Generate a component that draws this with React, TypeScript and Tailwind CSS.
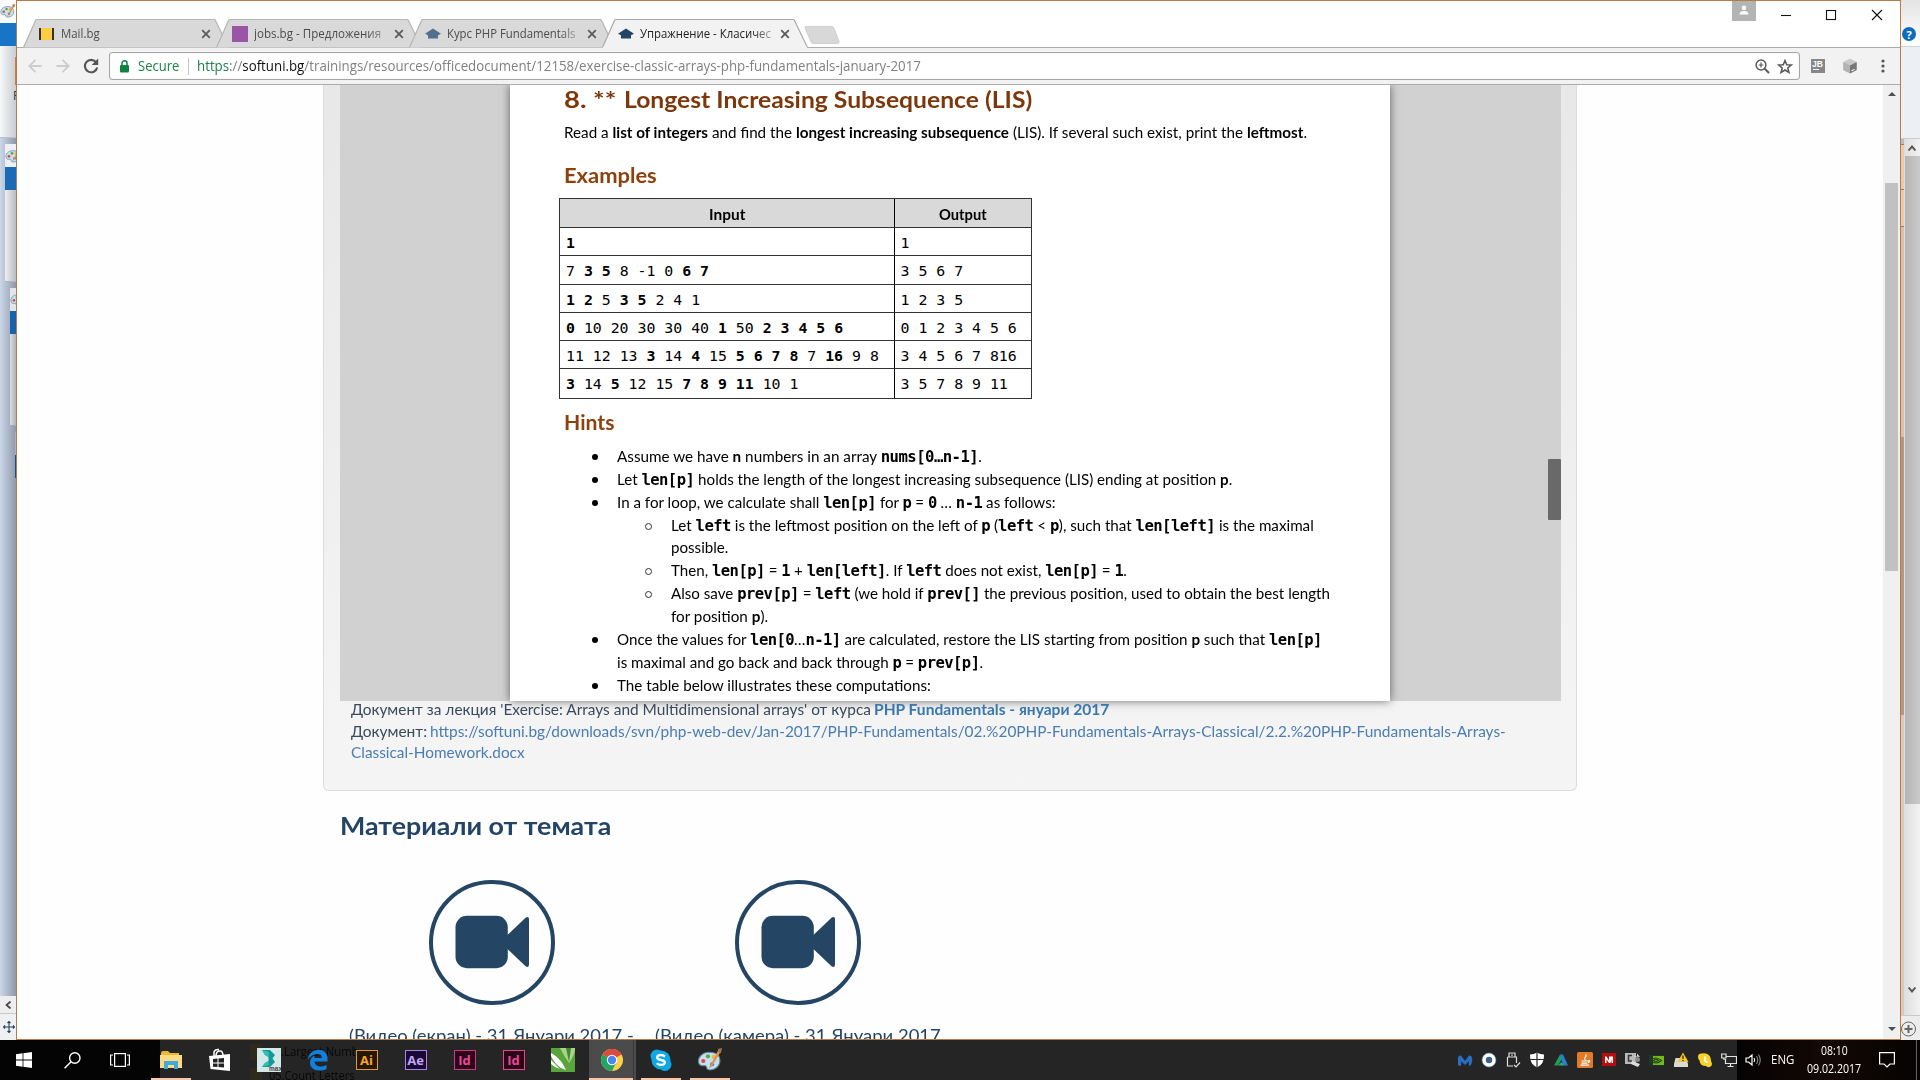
import { useLayoutEffect, useRef, useState, type ReactNode } from "react";

/** One line of text squeezed or stretched horizontally to a given width. */
function Fit({ w, className = "", children }: { w: number; className?: string; children: ReactNode }) {
  const ref = useRef<HTMLSpanElement>(null);
  const [k, setK] = useState(1);
  useLayoutEffect(() => {
    if (ref.current) setK(w / ref.current.offsetWidth);
  }, [w]);
  return (
    <span className="block shrink-0 whitespace-nowrap" style={{ width: w }}>
      <span ref={ref} className={`inline-block origin-left whitespace-pre ${className}`} style={{ transform: `scaleX(${k})` }}>
        {children}
      </span>
    </span>
  );
}

const UI = "font-['Open_Sans','Noto_Sans',sans-serif]";

/* ---------- tab strip ---------- */

function TabShape({ active }: { active?: boolean }) {
  return (
    <svg className="absolute inset-0" width="206" height="29" viewBox="0 0 206 29">
      <path
        d="M0.5 28.5 L12.5 1.5 Q13 0.5 14 0.5 H191 Q192 0.5 192.5 1.5 L205.5 28.5"
        fill={active ? "#f2f2f2" : "#d9d9d9"}
        stroke={active ? "#a9a9a9" : "#b5b5b5"}
        strokeWidth="1.2"
      />
      {active && <path d="M1 28.5 H205" stroke="#f2f2f2" strokeWidth="2" />}
    </svg>
  );
}

const CapIcon = ({ fill }: { fill: string }) => (
  <svg width="16" height="12" viewBox="0 0 16 12">
    <path d="M8 0.500 L16 5.800 L13 7.200 V10.500 H3 V7.200 L0 5.800 Z" fill={fill} />
  </svg>
);

function Tab({ icon, title, w, active, fade }: { icon: ReactNode; title: string; w: number; active?: boolean; fade?: boolean }) {
  return (
    <div className={`relative -mr-[12.7px] h-[29px] w-[206px] shrink-0 ${active ? "z-10" : ""}`}>
      <TabShape active={active} />
      <div className="relative flex h-[29px] items-center pl-[16px]">
        <span className="flex w-[16px] justify-center">{icon}</span>
        <div
          className={`ml-[6px] w-[134px] text-[12.6px] leading-[22px] ${UI} ${active ? "text-[#222]" : "text-[#4c4c4c]"} ${
            fade ? "[mask-image:linear-gradient(to_right,black_84%,rgba(0,0,0,0.25))]" : ""
          }`}
        >
          <Fit w={w}>{title}</Fit>
        </div>
        <svg className="ml-[6px]" width="10" height="10" viewBox="0 0 10 10">
          <path d="M1.2 1.2 L8.8 8.8 M8.8 1.2 L1.2 8.8" stroke="#5c5c5c" strokeWidth="1.8" />
        </svg>
      </div>
    </div>
  );
}

function TabStrip() {
  return (
    <div className="relative flex h-[47px] items-end border-b border-[#acacac] bg-white pl-[5.5px]">
      <div className="relative -mb-px flex">
        <Tab
          title="Mail.bg"
          w={39}
          icon={<span className="h-[12px] w-[15px] border-x-2 border-[#333] bg-[#ffce45]" />}
        />
        <Tab title="jobs.bg - Предложения" w={127} fade icon={<span className="h-[16px] w-[16px] bg-[#9a55a6]" />} />
        <Tab title="Курс PHP Fundamentals" w={128} fade icon={<CapIcon fill="#526f8c" />} />
        <Tab title="Упражнение - Класичес" w={131} fade active icon={<CapIcon fill="#234465" />} />
      </div>
      <svg className="mb-[3px] ml-[8px]" width="36" height="18" viewBox="0 0 36 18">
        <path d="M2 0.5 H28 Q29.5 0.5 30 2 L35 15 Q35.500 17.5 34 17.5 H9 Q7.500 17.500 7 16 L1 2 Q0.500 0.500 2 0.500 Z" fill="#d8d8d8" stroke="#cccccc" strokeWidth="0.8" />
      </svg>
      <div className="absolute right-0 top-0 flex h-[28px] items-start">
        <span className="flex h-[20px] w-[24px] justify-center bg-[#b4b4b4] pt-[4px]">
          <svg width="10" height="10" viewBox="0 0 10 10">
            <circle cx="5" cy="2.700" r="2.300" fill="#fff" />
            <path d="M0.500 9.500 Q0.500 6 5 6 Q9.500 6 9.500 9.500 Z" fill="#fff" />
          </svg>
        </span>
        <svg width="144" height="28" viewBox="0 0 144 28" fill="none" stroke="#111" strokeWidth="1.100">
          <path d="M25 14.500 H35" />
          <rect x="70.500" y="9.500" width="9" height="9" />
          <path d="M116 9 L126 19 M126 9 L116 19" />
        </svg>
      </div>
    </div>
  );
}

/* ---------- toolbar ---------- */

function Toolbar() {
  return (
    <div className="flex h-[37px] items-center border-b border-[#acacac] bg-[#f2f2f2] pl-[11px]">
      <svg width="14" height="14" viewBox="0 0 14 14" fill="none" stroke="#cdcdcd" strokeWidth="1.900">
        <path d="M13.500 7 H1.500 M7.500 0.800 L1.300 7 L7.500 13.200" />
      </svg>
      <svg className="ml-[14px]" width="14" height="14" viewBox="0 0 14 14" fill="none" stroke="#cdcdcd" strokeWidth="1.900">
        <path d="M0.500 7 H12.500 M6.500 0.800 L12.700 7 L6.500 13.200" />
      </svg>
      <svg className="ml-[13px]" width="16" height="16" viewBox="0 0 16 16">
        <path d="M13 4.200 A6.200 6.200 0 1 0 14.200 9.500" fill="none" stroke="#555" strokeWidth="2.100" />
        <path d="M15.200 0.500 V7 H8.700 Z" fill="#555" />
      </svg>
      <div className="ml-[10px] flex h-[28px] w-[1691px] items-center rounded-[3px] border border-[#a6a6a6] bg-white pl-[10px] shadow-[inset_0_0_1px_#bbb]">
        <svg width="9" height="13" viewBox="0 0 9 13">
          <path d="M2 6 V3.300 A2.500 2.500 0 0 1 7 3.300 V6" fill="none" stroke="#0f8145" strokeWidth="1.500" />
          <rect x="0" y="5" width="9" height="7.500" rx="1" fill="#0f8145" />
        </svg>
        <div className={`ml-[9px] flex items-center text-[14px] leading-[24px] ${UI}`}>
          <Fit w={41} className="text-[#1b8049]">Secure</Fit>
          <span className="ml-[8.500px] h-[17px] w-px bg-[#c4c4c4]" />
          <span className="w-[8.500px]" />
          <Fit w={724} className="text-[#808080]">
            <span className="text-[#1b8049]">https</span>://<span className="text-[#111]">softuni.bg</span>
            /trainings/resources/officedocument/12158/exercise-classic-arrays-php-fundamentals-january-2017
          </Fit>
        </div>
        <div className="ml-auto flex items-center gap-[7px] pr-[6px]">
          <svg width="15" height="15" viewBox="0 0 15 15" fill="none" stroke="#585858">
            <circle cx="6" cy="6" r="4.900" strokeWidth="1.500" />
            <path d="M9.600 9.600 L14 14" strokeWidth="2" />
            <path d="M3.600 6 H8.400 M6 3.600 V8.400" strokeWidth="1.200" />
          </svg>
          <svg width="16" height="15" viewBox="0 0 16 15" fill="none" stroke="#585858" strokeWidth="1.500">
            <path d="M8 1.500 L9.700 5.700 L14.300 6 L10.800 9 L12 13.500 L8 11 L4 13.500 L5.200 9 L1.700 6 L6.300 5.700 Z" />
          </svg>
        </div>
      </div>
      <span className="ml-[11px] flex h-[14px] w-[14px] flex-col bg-[#878787] pl-px font-['Liberation_Sans',sans-serif] text-[8.500px] font-bold leading-[10px] text-white">
        JB
        <span className="ml-px h-px w-[6px] bg-white" />
      </span>
      <svg className="ml-[18px]" width="14" height="16" viewBox="0 0 14 16">
        <path d="M7 0.500 L13.700 4 V12 L7 15.500 L0.300 12 V4 Z" fill="#c9c9c9" />
        <path d="M7 7.500 L13.700 4 V12 L7 15.500 Z" fill="#777" />
        <path d="M0.300 4 L7 7.500 V15.500 L0.300 12 Z" fill="#b3b3b3" />
        <path d="M8.500 13 L11.500 11.300" stroke="#eee" strokeWidth="1.200" />
      </svg>
      <svg className="ml-[23.500px]" width="4" height="14" viewBox="0 0 4 14" fill="#555">
        <circle cx="2" cy="2" r="1.600" />
        <circle cx="2" cy="7" r="1.600" />
        <circle cx="2" cy="12" r="1.600" />
      </svg>
    </div>
  );
}

/* ---------- document ---------- */

const M = ({ children }: { children: ReactNode }) => (
  <span className="font-['DejaVu_Sans_Mono',monospace] text-[15.400px] font-bold leading-none tracking-[-0.550px]">{children}</span>
);

/** Space-separated cells; a leading * marks a bold one. */
function Nums({ s }: { s: string }) {
  return (
    <span className="whitespace-pre font-['DejaVu_Sans_Mono',monospace] text-[14.850px]">
      {s.split(" ").map((t, i) => (
        <span key={i}>
          {i > 0 ? " " : ""}
          {t.startsWith("*") ? <b>{t.slice(1)}</b> : t}
        </span>
      ))}
    </span>
  );
}

const rows: [string, string][] = [
  ["*1", "1"],
  ["7 *3 *5 8 -1 0 *6 *7", "3 5 6 7"],
  ["*1 *2 5 *3 *5 2 4 1", "1 2 3 5"],
  ["*0 10 20 30 30 40 *1 50 *2 *3 *4 *5 *6", "0 1 2 3 4 5 6"],
  ["11 12 13 *3 14 *4 15 *5 *6 *7 *8 7 *16 9 8", "3 4 5 6 7 816"],
  ["*3 14 *5 12 15 *7 *8 *9 *11 10 1", "3 5 7 8 9 11"],
];

type Line = { mark?: "disc" | "ring"; sub?: boolean; w: number; text: ReactNode };
const lines: Line[] = [
  { mark: "disc", w: 365, text: <>Assume we have <b>n</b> numbers in an array <M>nums[0…n-1]</M>.</> },
  { mark: "disc", w: 615.5, text: <>Let <M>len[p]</M> holds the length of the longest increasing subsequence (LIS) ending at position <b>p</b>.</> },
  { mark: "disc", w: 439, text: <>In a for loop, we calculate shall <M>len[p]</M> for <M>p</M> = <M>0</M> … <M>n-1</M> as follows:</> },
  { mark: "ring", sub: true, w: 643, text: <>Let <M>left</M> is the leftmost position on the left of <M>p</M> (<M>left</M> &lt; <M>p</M>), such that <M>len[left]</M> is the maximal</> },
  { sub: true, w: 57.5, text: "possible." },
  { mark: "ring", sub: true, w: 456, text: <>Then, <M>len[p]</M> = <M>1</M> + <M>len[left]</M>. If <M>left</M> does not exist, <M>len[p]</M> = <M>1</M>.</> },
  { mark: "ring", sub: true, w: 659, text: <>Also save <M>prev[p]</M> = <M>left</M> (we hold if <M>prev[]</M> the previous position, used to obtain the best length</> },
  { sub: true, w: 97.5, text: <>for position <b>p</b>).</> },
  { mark: "disc", w: 704.5, text: <>Once the values for <M>len[0</M>…<M>n-1]</M> are calculated, restore the LIS starting from position <b>p</b> such that <M>len[p]</M></> },
  { w: 366.5, text: <>is maximal and go back and back through <M>p</M> = <M>prev[p]</M>.</> },
  { mark: "disc", w: 314, text: "The table below illustrates these computations:" },
];

function DocumentPage() {
  return (
    <div className="h-[616px] w-[880px] shrink-0 overflow-hidden bg-white pl-[54px] font-['Lato',sans-serif] text-[15px] text-black shadow-[0_0_9px_rgba(0,0,0,0.55)]">
      <div className="flex pt-px text-[23.500px] font-bold leading-[27px] text-[#7c380a]">
        <Fit w={59.5}>8. ** </Fit>
        <Fit w={408.5}>Longest Increasing Subsequence (LIS)</Fit>
      </div>
      <div className="mt-[6.500px] leading-[24px]">
        <Fit w={742.5}>
          Read a <b>list of integers</b> and find the <b>longest increasing subsequence</b> (LIS). If several such exist, print the <b>leftmost</b>.
        </Fit>
      </div>
      <div className="mt-[18px] text-[20.500px] font-bold leading-[26px] text-[#8f400b]">
        <Fit w={93}>Examples</Fit>
      </div>
      <div className="-ml-[5px] mt-[10.500px] w-[473px] border border-[#333]">
        <div className="flex h-[29px] border-b border-[#333] bg-[#d9d9d9] text-center font-bold leading-[30px]">
          <div className="flex w-[335px] justify-center border-r border-black pr-px"><Fit w={36}>Input</Fit></div>
          <div className="flex flex-1 justify-center"><Fit w={48}>Output</Fit></div>
        </div>
        {rows.map(([a, b], i) => (
          <div key={i} className="flex h-[28.250px] border-b border-[#333] leading-[28px] last:border-b-0">
            <div className="w-[335px] border-r border-black pl-[6px]"><Nums s={a} /></div>
            <div className="flex-1 pl-[5.500px]"><Nums s={b} /></div>
          </div>
        ))}
      </div>
      <div className="mt-[10.500px] text-[20.500px] font-bold leading-[26px] text-[#8f400b]">
        <Fit w={50.5}>Hints</Fit>
      </div>
      <div className="mt-[10px]">
        {lines.map((l, i) => (
          <div key={i} className="flex h-[22.870px] leading-[22.870px]">
            <span className={`flex shrink-0 items-center ${l.sub ? "w-[106.500px] pl-[81px]" : "w-[53px] pl-[27.500px]"}`}>
              {l.mark === "disc" && <span className="mt-[2px] h-[6px] w-[6px] rounded-full bg-black" />}
              {l.mark === "ring" && <span className="mt-[2px] h-[7px] w-[7px] rounded-full border border-[#333]" />}
            </span>
            <Fit w={l.w}>{l.text}</Fit>
          </div>
        ))}
      </div>
    </div>
  );
}

/* ---------- web page ---------- */

function VideoIcon() {
  return (
    <div className="flex h-[125px] w-[126px] items-center justify-center rounded-full border-4 border-[#244564] pb-[2px] pl-px">
      <svg width="75" height="54" viewBox="0 0 76 54" fill="#244564">
        <rect x="0.500" y="0.500" width="53" height="53" rx="11.500" />
        <path d="M52 21 L71.500 2.500 Q74.500 0.500 75 3.500 V50 Q74.500 53.500 71.500 51.500 L52 33 Z" />
      </svg>
    </div>
  );
}

function WebPage() {
  return (
    <div className="flex h-[954px] bg-[#fefefe]">
      <div className="h-[954px] w-[1866px] overflow-hidden pl-[306px] font-['Lato',sans-serif] text-[#234465]">
        <div className="h-[706px] w-[1254px] rounded-b-[6px] border border-t-0 border-[#dcdcdc] bg-gradient-to-b from-[#e8e8e8] to-[#f5f5f5] pl-[16px]">
          <div className="flex h-[616px] w-[1221px] bg-[#d1d1d1] pl-[170px]">
            <DocumentPage />
            <div className="flex h-[616px] w-[171px] items-start justify-end">
              <div className="mt-[374px] h-[61px] w-[13px] rounded-[1px] bg-[#696969]" />
            </div>
          </div>
          <div className="pl-[10.500px] text-[15px] leading-[21.500px]">
            <div className="-mt-[2px] flex">
              <Fit w={523.5} className="text-[#3a4a5c]">Документ за лекция 'Exercise: Arrays and Multidimensional arrays' от курса </Fit>
              <Fit w={235.5} className="font-bold text-[#3a76af]">PHP Fundamentals - януари 2017</Fit>
            </div>
            <div className="flex">
              <Fit w={79.5} className="text-[#3a4a5c]">Документ: </Fit>
              <Fit w={1075.5} className="text-[#4a7db3]">
                https://softuni.bg/downloads/svn/php-web-dev/Jan-2017/PHP-Fundamentals/02.%20PHP-Fundamentals-Arrays-Classical/2.2.%20PHP-Fundamentals-Arrays-
              </Fit>
            </div>
            <Fit w={174} className="text-[#4a7db3]">Classical-Homework.docx</Fit>
          </div>
        </div>
        <div className="ml-[17px] mt-[17px] text-[25.500px] font-bold leading-[34px]">
          <Fit w={271}>Материали от темата</Fit>
        </div>
        <div className="ml-[26px] mt-[38px] flex gap-[20px] text-[18px] leading-[26px]">
          <div className="w-[286px]">
            <div className="pl-[80px]"><VideoIcon /></div>
            <div className="mt-[17px]"><Fit w={284.5}>(Видео (екран) - 31 Януари 2017 -</Fit></div>
          </div>
          <div className="w-[286px]">
            <div className="pl-[80px]"><VideoIcon /></div>
            <div className="mt-[17px]"><Fit w={286}>(Видео (камера) - 31 Януари 2017</Fit></div>
          </div>
        </div>
      </div>
      <div className="flex h-[954px] w-[17px] flex-col items-center bg-[#f0f0f0]">
        <svg className="mt-[7px]" width="8" height="4" viewBox="0 0 8 4"><path d="M0 4 L4 0 L8 4 Z" fill="#505050" /></svg>
        <div className="mt-[87px] h-[388px] w-[13px] bg-[#c1c1c1]" />
        <svg className="mb-[8px] mt-auto" width="8" height="4" viewBox="0 0 8 4"><path d="M0 0 L4 4 L8 0 Z" fill="#505050" /></svg>
      </div>
    </div>
  );
}

/* ---------- windows behind the browser ---------- */

function Palette({ size = 22 }: { size?: number }) {
  return (
    <svg width={size} height={size} viewBox="0 0 24 24" className="shrink-0">
      <path d="M12 4 C4 4 0.500 10 1.500 14 C2.500 18 6 17 8 17 C10 17 8 21 12 21 C19 21 22.500 16 22 11 C21.500 6 17 4 12 4 Z" fill="#c7dfee" stroke="#5b8299" strokeWidth="1" />
      <circle cx="6" cy="12.500" r="2" fill="#d84b3e" />
      <circle cx="10.500" cy="8" r="2" fill="#57a64a" />
      <circle cx="16" cy="8.500" r="2" fill="#f0b63c" />
      <circle cx="14.500" cy="15.500" r="1.900" fill="#3a6fb0" />
      <path d="M21 1 L12.500 17 L11 20 L14.500 17.500 L23 3 Z" fill="#d89853" />
      <path d="M20 1 L24 0 L23 5 L20.500 4 Z" fill="#a9714b" />
    </svg>
  );
}

function LeftStrip() {
  return (
    <div className="relative flex h-[1040px] w-[16px] shrink-0 flex-col overflow-hidden bg-gradient-to-r from-[#ccd8ea] to-[#8f99aa]">
      <div className="flex h-[23px] items-center bg-[#fafafa]"><Palette size={15} /></div>
      <div className="h-[23px] bg-[#1874c5]" />
      <div className="h-[92px] border-b border-[#b8c2cf] bg-gradient-to-r from-[#f6f8fa] to-[#c9ccd1]">
        <div className="ml-[15px] mt-[11px] h-[28px] w-px bg-[#c9803e]" />
        <div className={`ml-[13px] mt-[4px] text-[12px] leading-[14px] text-[#333] ${UI}`}>P</div>
      </div>
      <div className="ml-[5px] mt-[6px] flex h-[23px] items-center bg-[#eef0f3]"><Palette size={16} /></div>
      <div className="ml-[5px] h-[23px] bg-[#1a6ab5]" />
      <div className="ml-[5px] h-[92px] border-b border-[#aab4c3] bg-gradient-to-r from-[#eef0f2] to-[#b9bcc0]" />
      <div className="ml-[10px] mt-[6px] flex h-[23px] items-center bg-[#e3e5e8]"><Palette size={16} /></div>
      <div className="ml-[10px] h-[23px] bg-[#1762a8]" />
      <div className="ml-[10px] h-[92px] border-b border-[#a0aaba] bg-gradient-to-r from-[#dcdedd] to-[#aeb1b2]" />
      <div className="ml-[15px] mt-[6px] h-[23px] bg-[#aab0b8]" />
      <div className="ml-[15px] h-[23px] bg-[#1b4d80]" />
      <div className="mt-auto flex h-[18px] items-center justify-center border-b border-[#c9c9c9] bg-[#eeeeee]">
        <svg width="7" height="8" viewBox="0 0 7 8" fill="none" stroke="#444" strokeWidth="1.700"><path d="M5.500 0.500 L1.500 4 L5.500 7.500" /></svg>
      </div>
      <div className="flex h-[26px] items-center bg-[#eef0f2] pl-[3px]">
        <svg width="12" height="12" viewBox="0 0 12 12" stroke="#25405e" fill="none" strokeWidth="1.100">
          <path d="M0.500 6 H11.500 M6 0.500 V11.500 M4.500 2 L6 0.500 L7.500 2 M4.500 10 L6 11.500 L7.500 10 M2 4.500 L0.500 6 L2 7.500 M10 4.500 L11.500 6 L10 7.500" />
        </svg>
      </div>
    </div>
  );
}

function RightStrip() {
  return (
    <div className="flex h-[1040px] w-[19px] shrink-0 flex-col bg-[#f0f0f0]">
      <div className="h-[47px] border-b border-[#cfd2d6] bg-gradient-to-b from-[#e4e4e4] to-white pt-[27px]">
        <span className={`ml-[1px] flex h-[14px] w-[14px] items-center justify-center rounded-full bg-[#0f6cbd] text-[11px] font-bold leading-none text-white ${UI}`}>?</span>
      </div>
      <div className="h-[92px] border-b border-[#c8ccd2] bg-[#eceff3]" />
      <div className="flex h-[876px]">
        <div className="flex w-[3px] flex-col">
          <div className="h-[5px] bg-[#bbb]" />
          <div className="h-[46px] border-y border-[#8f7f75] bg-[#e9cbb5]" />
          <div className="h-[37px] border-b border-[#8f7f75] bg-[#e9cbb5]" />
          <div className="h-[210px] bg-[#dcc0af]" />
          <div className="h-[278px] bg-[#b39787]" />
          <div className="flex-1 bg-[#dcc8bc]" />
        </div>
        <div className="flex flex-1 flex-col items-center bg-gradient-to-r from-[#dedede] to-[#f2f2f2]">
          <svg className="mt-[6px]" width="8" height="6" viewBox="0 0 8 6" fill="none" stroke="#555" strokeWidth="1.900"><path d="M0.500 5.500 L4 1.500 L7.500 5.500" /></svg>
          <div className="mt-[5px] h-[648px] w-[15px] bg-gradient-to-r from-[#b5b5b5] to-[#cacaca]" />
          <svg className="mb-[22px] mt-auto" width="8" height="6" viewBox="0 0 8 6" fill="none" stroke="#555" strokeWidth="1.900"><path d="M0.500 0.500 L4 4.500 L7.500 0.500" /></svg>
        </div>
      </div>
      <div className="h-[25px] border-t border-[#c9c9c9] bg-[#ececec]">
        <svg className="mt-[5px]" width="16" height="16" viewBox="0 0 16 16" fill="none" stroke="#666">
          <circle cx="7.500" cy="8" r="7" />
          <path d="M3.500 8 H11.500 M7.500 4 V12" strokeWidth="2" />
        </svg>
      </div>
    </div>
  );
}

/* ---------- taskbar ---------- */

function Adobe({ t, box }: { t: string; box: string }) {
  return (
    <span className={`flex h-[20px] w-[22px] items-center justify-center border-[1.500px] text-[13px] font-bold leading-none ${UI} ${box}`}>
      {t}
    </span>
  );
}

const apps: { icon: ReactNode; open?: boolean; on?: boolean }[] = [
  {
    open: true,
    icon: (
      <svg width="22" height="20" viewBox="0 0 22 20">
        <path d="M1 3 Q1 1 3 1 H8 L10 3 H19 V6 H1 Z" fill="#e8b931" />
        <path d="M0 5 H22 V18 H0 Z" fill="#fbdc84" />
        <path d="M4 11 H18 V19 H14 V15 H8 V19 H4 Z" fill="#40a9dd" />
      </svg>
    ),
  },
  {
    icon: (
      <svg width="22" height="24" viewBox="0 0 22 24">
        <path d="M5 8 V4 Q6 1 10 1.500 M7 8 Q7 3 11 3 Q14 3 14 8" fill="none" stroke="#fff" strokeWidth="1.500" />
        <path d="M0 8 L21 6 V23 L1.500 21 Z" fill="#fff" />
        <path d="M4 11 L8.500 10.600 V14.500 H4 Z M9.500 10.500 L15 10 V14.500 H9.500 Z M4 15.500 H8.500 V19 L4 18.700 Z M9.500 15.500 H15 V19.500 L9.500 19 Z" fill="#222" />
      </svg>
    ),
  },
  {
    icon: (
      <svg width="24" height="24" viewBox="0 0 24 24">
        <rect width="24" height="24" fill="#d5e8e8" />
        <path d="M5 2 H13 L18 7 L15.500 10.500 L18 14 L13 19 H5 L8 15 L11.500 13 V9 L8 7 Z" fill="#139a98" />
        <path d="M5 2 L12 4 L11.500 9 L8 7 Z M5 19 L12 17 L11.500 13 L8 15 Z" fill="#35bdb6" />
        <text x="12" y="23" fontSize="6.500" fontFamily="Liberation Sans" fontWeight="bold" fill="#444">max</text>
      </svg>
    ),
  },
  {
    icon: (
      <svg width="22" height="22" viewBox="0 0 22 22">
        <path d="M1 10.500 C1.500 4.500 6 0.700 11.500 0.700 C17.500 0.700 20.500 5 20.500 9.500 V12.500 H7.500 C7.800 16 10.500 17.500 13.500 17.500 C16 17.500 18 16.800 19.500 16 V20 C17.500 21 15 21.500 12.500 21.500 C6.500 21.500 3 18 3 13.500 C3 10 5 7.500 8 6.200 C7.500 7.200 7.300 8 7.300 9 H14.800 C14.800 6.500 13.200 5 10.500 5 C6.500 5 3 7 1 10.500 Z" fill="#1180dc" />
      </svg>
    ),
  },
  { icon: <Adobe t="Ai" box="border-[#e39a2c] bg-[#251703] text-[#f5a52c]" /> },
  { icon: <Adobe t="Ae" box="border-[#a987e0] bg-[#170a36] text-[#c5a3f5]" /> },
  { icon: <Adobe t="Id" box="border-[#c83a82] bg-[#2c0518] text-[#e8489a]" /> },
  { icon: <Adobe t="Id" box="border-[#e04a86] bg-[#2c0518] text-[#e8489a]" /> },
  {
    icon: (
      <svg width="24" height="24" viewBox="0 0 24 24">
        <rect width="24" height="24" fill="#5aa43e" />
        <path d="M9 0 Q13 8 18 15 Q23 8 24 2 V0 Z" fill="#a7d487" />
        <path d="M15 0 L18 14 L20 0 Z" fill="#3f8a32" />
        <path d="M0 5 Q8 9 13 18 L15 22 L10 20 Q3 15 0 8 Z M0 12 L9 21 Q3 19 0 16 Z" fill="#fff" />
      </svg>
    ),
  },
  {
    open: true,
    on: true,
    icon: (
      <svg width="22" height="22" viewBox="0 0 22 22">
        <circle cx="11" cy="11" r="11" fill="#fbd04a" />
        <path d="M11 11 L1.500 5.500 A11 11 0 0 1 20.500 5.500 Z" fill="#dd4b3e" />
        <path d="M11 0 A11 11 0 0 1 20.600 6 H11 Z" fill="#dd4b3e" />
        <path d="M1.500 5.500 A11 11 0 0 0 11 22 L15.300 13.500 L11 11 Z" fill="#22a565" />
        <circle cx="11" cy="11" r="5.200" fill="#fff" />
        <circle cx="11" cy="11" r="4.200" fill="#4a86ee" />
      </svg>
    ),
  },
  {
    open: true,
    icon: (
      <svg width="22" height="22" viewBox="0 0 22 22">
        <circle cx="7" cy="7" r="6.500" fill="#0fa8e6" />
        <circle cx="15" cy="15.500" r="6.500" fill="#0fa8e6" />
        <circle cx="11" cy="11" r="9.500" fill="#0fa8e6" />
        <path d="M15 7.500 Q13 5.800 10.500 6 Q7 6.200 7.200 8.500 Q7.400 10.300 11 11 Q15 11.700 14.800 13.700 Q14.500 16 11 16 Q8.500 16 6.800 14.300" fill="none" stroke="#fff" strokeWidth="2.300" />
      </svg>
    ),
  },
  { open: true, icon: <Palette size={25} /> },
];

const tray: ReactNode[] = [
  <path d="M1 13 V6 Q1 3 4 3.500 L8 9 L12 3.500 Q15 3 15 6 Q16 10 13 14 Q11 14 12 9 L8 13 L4 9 Q5 14 3 14 Z" fill="#2a6fbf" />,
  <>
    <circle cx="8" cy="8" r="7.500" fill="#3d5f8f" />
    <circle cx="8" cy="8" r="5" fill="none" stroke="#fff" strokeWidth="3.500" />
  </>,
  <path d="M4 5 V1 H10 V5 M2.500 5 H11.500 V11 M2.500 5 V14 H8 M6 3 H8 M9 13 L11 15 L15 10.500" fill="none" stroke="#ddd" strokeWidth="1.200" />,
  <>
    <path d="M8 0.500 Q11 2.500 15 2.500 Q15.500 12 8 15.500 Q0.500 12 1 2.500 Q5 2.500 8 0.500 Z" fill="#fff" />
    <path d="M8 0 V16 M0 7.500 H16" stroke="#262626" strokeWidth="1.200" />
  </>,
  <>
    <path d="M1 13.500 L7 2.500 L9 7 L5 13.500 Z" fill="#1f9a62" />
    <path d="M7 2.500 H10 L15 13.500 H10 Z" fill="#2a80d0" />
    <path d="M5 13.500 L8.500 10 L11 13.500 Z" fill="#2fae6b" />
  </>,
  <>
    <rect width="16" height="16" rx="1.500" fill="#e37a28" />
    <path d="M8.500 2.500 Q10 4 8 5.500 Q7 7 8.500 8 M4.500 9 H11 Q13 8 12.500 9.500 Q12 10.500 11 10.500 M4.500 11.200 H10.500 M3.500 13.200 H12" fill="none" stroke="#fff" strokeWidth="1.200" />
  </>,
  <>
    <rect x="1" y="1" width="14" height="13" fill="#b80d0d" />
    <path d="M4 11 V4.500 H5.500 L8 8.500 V4.500 H12 V11 H10.500 V7 L9.500 11 H8 L5.500 7.500 V11 Z" fill="#fff" />
  </>,
  <>
    <rect x="0" y="1" width="11" height="11" fill="#b9b9b9" />
    <path d="M7 3.500 H3.500 V9 H7" fill="none" stroke="#333" strokeWidth="1.500" />
    <path d="M7 4 H12 V1.500 L15 5 M7 9 L15 12 L13 15 L6 12 Z" fill="#dedede" />
    <circle cx="12.500" cy="7.500" r="2.500" fill="#8c8c8c" />
  </>,
  <>
    <rect x="0" y="3" width="15" height="11" fill="#1f3330" />
    <path d="M4 4 H15 V13 H4 Z" fill="#74b81b" />
    <path d="M1.500 8.500 Q6 3.500 12.500 8.500 Q7 13.500 1.500 8.500 Z M4.500 8.500 Q7 6 9.500 8.500 Q7 10.500 4.500 8.500 Z" fill="none" stroke="#244a10" strokeWidth="1.100" />
  </>,
  <>
    <path d="M2.500 6 H13 L15 12 V15 H1 V12 Z" fill="#d9d9cf" />
    <path d="M10 0.500 L15.500 10 H4.500 Z" fill="#f2c431" />
    <path d="M10 3.500 V7 M10 8 V9.200" stroke="#3b2d00" strokeWidth="1.300" />
  </>,
  <>
    <path d="M1 5 Q1 1 5 1.500 Q10 0.500 13 4.500 Q14 7 14 9 Q16.500 14 12.500 15 Q10 15.500 9 14 Q3 14 2.500 8.500 Q1 7 1 5 Z" fill="#f8d22c" />
    <path d="M8 4.500 V9 L10.500 10.500" fill="none" stroke="#fff" strokeWidth="1.500" />
  </>,
  <path d="M5 4.500 H15.500 V11.500 H4.500 V7 M9.500 12 V14.500 M6.500 14.500 H12.500 M0.700 2 H5 V6 H0.700 Z M3 6 V8" fill="none" stroke="#e2e2e2" strokeWidth="1.200" />,
  <>
    <path d="M1 6 H3.500 L7 3 V13 L3.500 10 H1 Z M9 6 Q10.500 8 9 10" fill="none" stroke="#fff" strokeWidth="1.200" />
    <path d="M11.500 4 Q14 8 11.500 12 M13.500 2.500 Q17 8 13.500 13.500" fill="none" stroke="#888" strokeWidth="1.100" />
  </>,
];

function Taskbar() {
  return (
    <div className="relative flex h-[40px] w-[1920px] overflow-hidden bg-[#252525]">
      <div className="flex w-[160px] shrink-0 bg-[#040404]">
        <span className="flex w-[48px] items-center justify-center">
          <svg width="16" height="16" viewBox="0 0 16 16" fill="#fff">
            <path d="M0 2.200 L6.600 1.300 V7.600 H0 Z M7.400 1.200 L16 0 V7.600 H7.400 Z M0 8.400 H6.600 V14.700 L0 13.800 Z M7.400 8.400 H16 V16 L7.400 14.800 Z" />
          </svg>
        </span>
        <span className="flex w-[48px] items-center justify-center">
          <svg width="17" height="17" viewBox="0 0 17 17" fill="none" stroke="#fff">
            <circle cx="10.800" cy="6" r="5.200" strokeWidth="1.400" />
            <path d="M7 9.800 L0.600 16.200" strokeWidth="1.500" />
          </svg>
        </span>
        <span className="flex w-[48px] items-center justify-center">
          <svg width="20" height="14" viewBox="0 0 20 14" fill="none" stroke="#fff" strokeWidth="1.200">
            <rect x="4.600" y="0.600" width="10.800" height="12.800" />
            <path d="M3 2 H0.600 V12 H3 M17 2 H19.400 V12 H17" />
          </svg>
        </span>
      </div>
      <div className={`absolute left-[250px] top-0 text-[12.500px] text-[#080808] ${UI}`}>
        <div className="flex h-[24px] items-center">
          <span className="mr-[19px] h-[16px] w-[12px] bg-[#2e2a1c]" />
          <Fit w={78} className="leading-[24px]">.Largest Numb</Fit>
        </div>
        <div className="flex h-[24px] items-center">
          <span className="mr-[7px] h-[16px] w-[12px] bg-[#2e2a1c]" />
          <Fit w={86} className="leading-[24px]">05.Count Letters</Fit>
        </div>
      </div>
      <div className="relative -ml-[14px] flex">
        {apps.map((a, i) => (
          <div
            key={i}
            className={`relative flex h-[40px] w-[49px] items-center justify-center ${
              a.on ? "bg-[linear-gradient(to_right,transparent_2px,#4b4b4b_2px,#4b4b4b_46px,#252525_46px,#4b4b4b_47px)]" : ""
            }`}
          >
            {a.icon}
            {a.open && <span className={`absolute bottom-0 h-[2px] bg-[#fac6a5] ${a.on ? "left-[2px] w-[44px]" : "left-[5px] w-[40px]"}`} />}
          </div>
        ))}
      </div>
      <div className="absolute right-0 top-0 h-[40px] w-[183px] bg-gradient-to-r from-[#050303] via-[#140904] to-[#050302]" />
      <div className="relative ml-auto flex text-white">
        {tray.map((t, i) => (
          <span key={i} className="flex w-[24px] items-center justify-center">
            <svg width="16" height="16" viewBox="0 0 16 16">{t}</svg>
          </span>
        ))}
        <div className={`ml-[6px] flex items-center text-[12px] leading-[18px] ${UI}`}>
          <Fit w={23}>ENG</Fit>
        </div>
        <div className={`ml-[13px] flex w-[54px] flex-col items-center pt-[2px] text-[12px] leading-[18px] ${UI}`}>
          <Fit w={27}>08:10</Fit>
          <Fit w={54}>09.02.2017</Fit>
        </div>
        <svg className="ml-[18px] mr-[21px] mt-[12px]" width="16" height="16" viewBox="0 0 16 16" fill="none" stroke="#fff" strokeWidth="1.200">
          <path d="M0.600 0.600 H15.400 V12 H11 L8 15 L5 12 H0.600 Z" />
        </svg>
        <span className="mr-[3px] h-[40px] w-px bg-[#6a6460]" />
      </div>
    </div>
  );
}

export default function App() {
  return (
    <div className="flex h-[1080px] w-[1920px] flex-col overflow-hidden bg-white">
      <div className="flex h-[1040px]">
        <LeftStrip />
        <div className="h-[1040px] w-[1885px] shrink-0 overflow-hidden border border-[#b97b46]">
          <TabStrip />
          <Toolbar />
          <WebPage />
        </div>
        <RightStrip />
      </div>
      <Taskbar />
    </div>
  );
}
